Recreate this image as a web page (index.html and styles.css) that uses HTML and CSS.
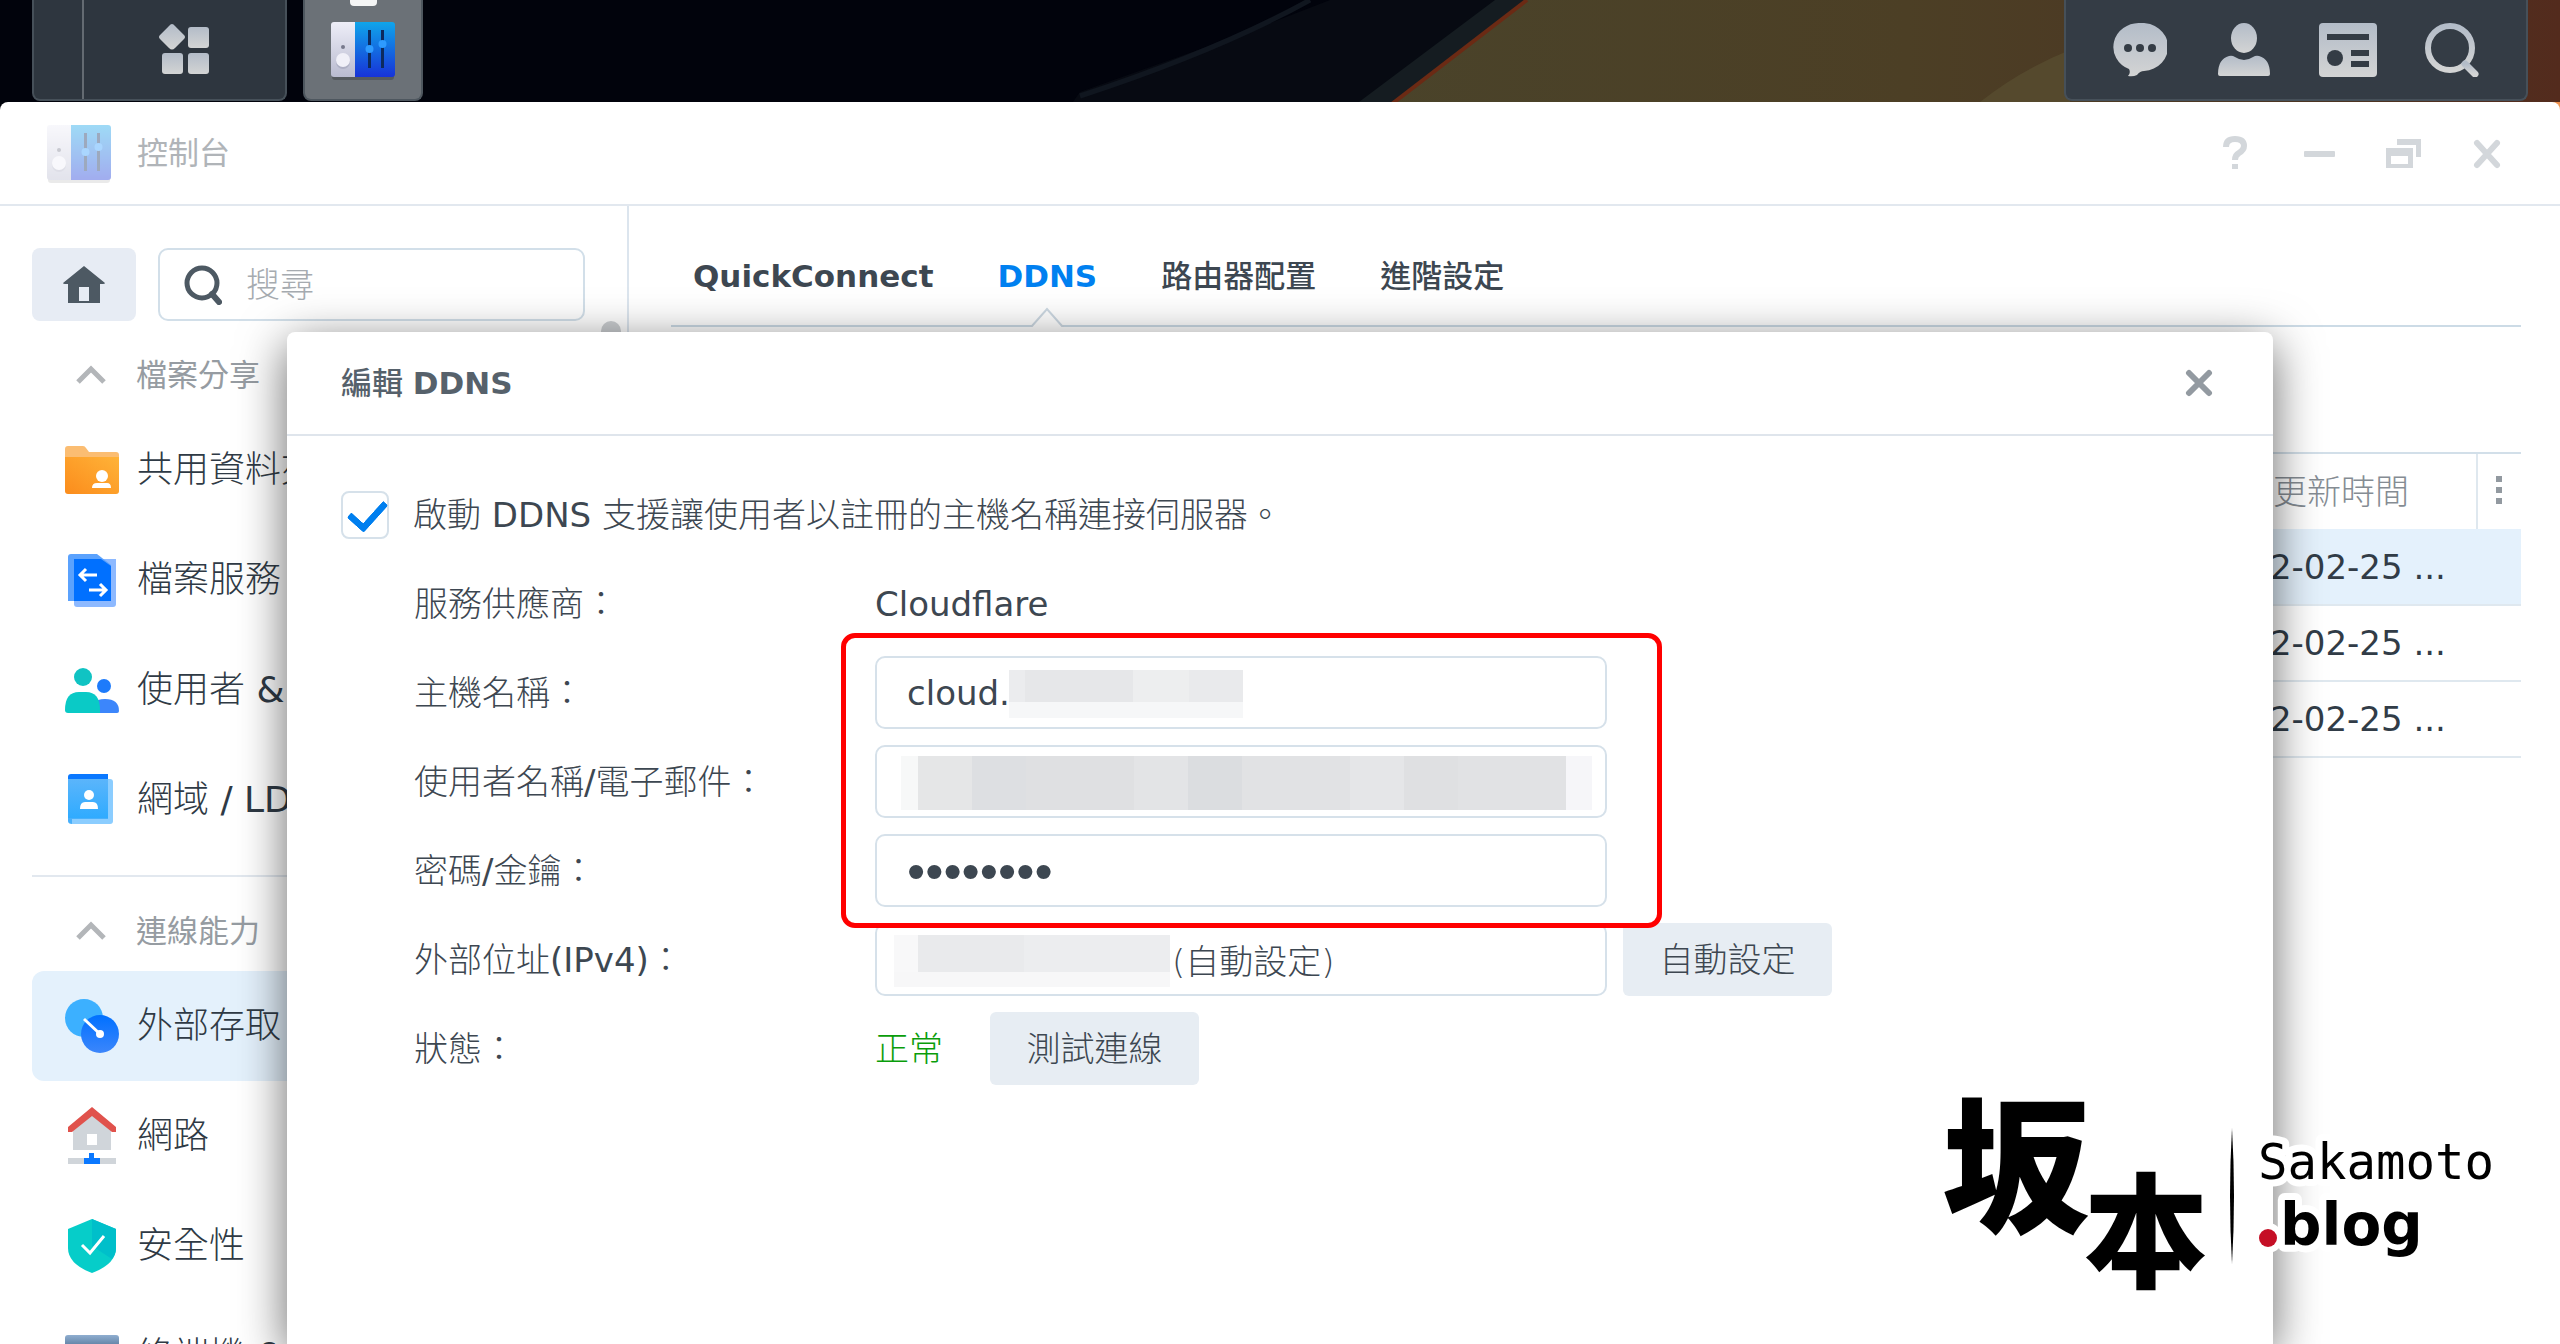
FILE: index.html
```
<!DOCTYPE html>
<html lang="zh-Hant">
<head>
  <meta charset="UTF-8">
  <meta name="viewport" content="width=device-width, initial-scale=1.0">
  <title>控制台 - DDNS</title>
  <link rel="stylesheet" href="styles.css">
</head>
<body>
  <!-- shared gradients and icons -->
  <svg class="defs" width="0" height="0" aria-hidden="true">
    <defs>
      <linearGradient id="gWall" x1="0" y1="0" x2="1" y2="0">
        <stop offset="0" stop-color="#4a432a"/>
        <stop offset="0.45" stop-color="#4c3f25"/>
        <stop offset="0.8" stop-color="#4c3523"/>
        <stop offset="1" stop-color="#532b1d"/>
      </linearGradient>
      <linearGradient id="gTray" x1="0" y1="0" x2="0" y2="1">
        <stop offset="0" stop-color="#b3bcc8"/>
        <stop offset="1" stop-color="#d3d4d4"/>
      </linearGradient>
      <linearGradient id="gPanel" x1="0" y1="0" x2="0" y2="1">
        <stop offset="0" stop-color="#10a5ea"/>
        <stop offset="1" stop-color="#1733d8"/>
      </linearGradient>
      <linearGradient id="gPanelSide" x1="0" y1="0" x2="0" y2="1">
        <stop offset="0" stop-color="#eeeef8"/>
        <stop offset="1" stop-color="#b9bbd0"/>
      </linearGradient>
      <linearGradient id="gFolder" x1="0" y1="1" x2="1" y2="0">
        <stop offset="0" stop-color="#fb8c1c"/>
        <stop offset="1" stop-color="#ffb338"/>
      </linearGradient>
      <linearGradient id="gBook" x1="0" y1="0" x2="0" y2="1">
        <stop offset="0" stop-color="#5bb5fb"/>
        <stop offset="1" stop-color="#2fabff"/>
      </linearGradient>
      <linearGradient id="gDisc" x1="0" y1="0" x2="0" y2="1">
        <stop offset="0" stop-color="#0070ff"/>
        <stop offset="1" stop-color="#3c86fb"/>
      </linearGradient>
      <linearGradient id="gTerm" x1="0" y1="0" x2="0" y2="1">
        <stop offset="0" stop-color="#8faed0"/>
        <stop offset="0.25" stop-color="#5f7fa2"/>
      </linearGradient>
    </defs>
    <symbol id="panel" viewBox="0 -3 64 62">
      <rect x="1" y="4" width="62" height="54" rx="3" fill="#000" opacity="0.2"/>
      <path d="M3 0H24V55H3a3 3 0 0 1-3-3V3a3 3 0 0 1 3-3Z" fill="url(#gPanelSide)"/>
      <path d="M24 0H61a3 3 0 0 1 3 3V52a3 3 0 0 1-3 3H24Z" fill="url(#gPanel)"/>
      <circle cx="12" cy="25" r="2" fill="#77798c"/>
      <circle cx="12" cy="40" r="7" fill="#9fa1b8" opacity="0.6"/>
      <circle cx="12" cy="38" r="7" fill="#f0f0f8"/>
      <path d="M38.500 8V46M51.500 8V46" stroke="#0c2a5e" stroke-width="3"/>
      <circle cx="38.500" cy="27" r="4" fill="#2e9bff"/>
      <circle cx="51.500" cy="22" r="4" fill="#2e9bff"/>
    </symbol>
  </svg>

  <div class="desktop">
    <svg class="wallpaper" viewBox="0 0 2560 120" preserveAspectRatio="xMaxYMin slice" aria-hidden="true">
      <rect width="2560" height="120" fill="#01030c"/>
      <path d="M1080 92L1240 35L1330 0H1560L1380 120H1060Z" fill="#070a12"/>
      <path d="M1080 96Q1220 50 1310 0" stroke="#10161f" stroke-width="5" fill="none"/>
      <path d="M1495 0H1530L1374 120H1335Z" fill="#151c21"/>
      <path d="M1527 0L1371 120H2560V0Z" fill="url(#gWall)"/>
      <path d="M1527 0L1371 120" stroke="#6b2a14" stroke-width="4"/>
      <path d="M1980 102Q2020 70 2070 50V102Z" fill="#55492d"/>
      <path d="M2540 102H2560V120H2540Z" fill="#ef9350"/>
    </svg>

    <header class="taskbar">
      <div class="launcher">
        <span class="launcher-edge"></span>
        <button class="launcher-btn" type="button" aria-label="主選單">
          <svg width="52" height="52" viewBox="0 0 52 52" fill="url(#gTray)">
            <path d="M13 0q1.500 0 3 2l9 9q2 2 0 4l-9 9q-3 3-6 0l-9-9q-2-2 0-4l9-9q1.500-2 3-2Z"/>
            <rect x="29" y="3" width="21" height="21" rx="3"/>
            <rect x="3" y="29" width="21" height="21" rx="3"/>
            <rect x="29" y="29" width="21" height="21" rx="3"/>
          </svg>
        </button>
      </div>
      <button class="task-app" type="button" aria-label="控制台">
        <svg width="64" height="62"><use href="#panel"/></svg>
      </button>
      <nav class="tray">
        <button type="button" aria-label="通知">
          <svg width="54" height="54" viewBox="0 0 54 54">
            <path d="M27 0A26 24 0 0 1 31 48Q27 48 24 52Q20 54 15 53Q18 50 16 46A26 24 0 0 1 27 0Z" fill="url(#gTray)"/>
            <g fill="#343c45"><circle cx="15" cy="25" r="4"/><circle cx="27" cy="25" r="4"/><circle cx="39" cy="25" r="4"/></g>
          </svg>
        </button>
        <button type="button" aria-label="使用者">
          <svg width="54" height="54" viewBox="0 0 54 54" fill="url(#gTray)">
            <ellipse cx="27" cy="15" rx="13" ry="15"/>
            <path d="M1 51Q1 36 12 33Q15 32 18 34Q27 40 36 34Q39 32 42 33Q53 36 53 51Q53 53 51 53H3Q1 53 1 51Z"/>
          </svg>
        </button>
        <button type="button" aria-label="小工具">
          <svg width="58" height="54" viewBox="0 0 58 54">
            <rect y="0" width="58" height="54" rx="4" fill="url(#gTray)"/>
            <g fill="#343c45"><path d="M8 11H50V17H8ZM32 27H50V33H32ZM32 38H50V44H32Z"/><circle cx="16" cy="35" r="8"/></g>
          </svg>
        </button>
        <button type="button" aria-label="搜尋">
          <svg width="54" height="54" viewBox="0 0 54 54" fill="none" stroke="url(#gTray)" stroke-width="6">
            <circle cx="25" cy="25" r="22"/><path d="M40 41L50 51" stroke-width="7" stroke-linecap="round"/>
          </svg>
        </button>
      </nav>
    </header>

    <main class="window">
      <div class="titlebar">
        <svg class="title-icon" width="64" height="62"><use href="#panel"/></svg>
        <h1>控制台</h1>
        <div class="controls">
          <button type="button" aria-label="說明">
            <svg width="32" height="34" viewBox="0 0 32 34" fill="none" stroke="#d3d7db" stroke-width="6"><path d="M7 11Q7 3 16 3Q25 3 25 10Q25 14 20 17Q16 19 16 24M16 28V33"/></svg>
          </button>
          <button type="button" aria-label="最小化">
            <svg width="32" height="34" viewBox="0 0 32 34"><rect x="1" y="15" width="31" height="6" rx="1" fill="#d3d7db"/></svg>
          </button>
          <button type="button" aria-label="還原">
            <svg width="36" height="34" viewBox="0 0 36 34" fill="#d3d7db"><path d="M12 3H36V21H31V9H12ZM1 12H28V32H1ZM6 20V28H23V20Z" fill-rule="evenodd"/></svg>
          </button>
          <button type="button" aria-label="關閉">
            <svg width="32" height="34" viewBox="0 0 32 34" stroke="#d3d7db" stroke-width="6" stroke-linecap="round"><path d="M6 7L26 29M26 7L6 29"/></svg>
          </button>
        </div>
      </div>

      <div class="content">
        <aside class="sidebar">
          <div class="side-tools">
            <button class="home" type="button" aria-label="首頁">
              <svg width="44" height="38" viewBox="0 0 44 38"><path d="M22 0L43 17Q43 18 41 18H38V37H6V18H3Q1 18 1 17ZM17 21V35H27V21Z" fill="#4d5963" fill-rule="evenodd"/></svg>
            </button>
            <label class="search">
              <svg width="38" height="40" viewBox="0 0 38 40" fill="none" stroke="#4d5963" stroke-width="5"><circle cx="18" cy="18" r="15"/><path d="M28 29L35 37" stroke-width="6" stroke-linecap="round"/></svg>
              <input type="search" placeholder="搜尋" aria-label="搜尋">
            </label>
            <span class="scroll-knob"></span>
          </div>

          <section class="side-group">
            <h2><svg width="30" height="20" viewBox="0 0 30 20"><path d="M2 17L15 4L28 17"/></svg>檔案分享</h2>
            <a href="#"><svg viewBox="0 0 54 58"><path d="M0 8Q0 5 3 5H18Q20 5 21 7L24 11H51Q54 11 54 14V30H0Z" fill="#fbbd72"/><path d="M0 16H54V50Q54 53 51 53H3Q0 53 0 50Z" fill="url(#gFolder)"/><circle cx="37" cy="35" r="6" fill="#fff"/><path d="M27 47Q27 42 32 42H42Q46 42 46 47Z" fill="#fff"/></svg>共用資料夾</a>
            <a href="#"><svg viewBox="0 0 54 58"><path d="M9 8H51V53Q51 56 48 56H12Q9 56 9 53Z" fill="#8db9ff"/><path d="M3 6Q3 3 6 3H32L46 14V50H3Z" fill="#5ba2fd"/><path d="M9 8H36L46 15V50H9Z" fill="#0070ff"/><path d="M32 24H15M21 18L15 24L21 30M24 39H41M35 33L41 39L35 45" fill="none" stroke="#fff" stroke-width="3"/></svg>檔案服務</a>
            <a href="#"><svg viewBox="0 0 54 58"><circle cx="39" cy="25" r="7" fill="#1d7bfb"/><path d="M26 52Q24 38 40 38Q54 38 54 50Q54 52 52 52Z" fill="#3c86fb"/><circle cx="18" cy="16" r="9" fill="#10c3c3"/><path d="M0 49Q0 31 14 31H21Q35 31 35 49V52H3Q0 52 0 49Z" fill="#0acac6"/></svg><span>使用者 <span class="latin">&amp;</span> 群組</span></a>
            <a href="#"><svg viewBox="0 0 54 58"><path d="M7 8H45Q48 8 48 11V50Q48 53 45 53H7Z" fill="#8bcdff"/><path d="M3 6Q3 3 6 3H43V12H3Z" fill="#0a78ff"/><path d="M3 8H43V47H3Z" fill="url(#gBook)"/><path d="M3 47H43V48H7V53Q3 53 3 50Z" fill="#48b0fb"/><circle cx="24" cy="24" r="5" fill="#fff"/><path d="M15 38Q15 31 20 31H28Q33 31 33 38Z" fill="#fff"/></svg><span>網域 <span class="latin">/ LDAP</span></span></a>
          </section>

          <section class="side-group">
            <h2><svg width="30" height="20" viewBox="0 0 30 20"><path d="M2 17L15 4L28 17"/></svg>連線能力</h2>
            <a href="#" class="active"><svg viewBox="0 0 54 58"><circle cx="19" cy="21" r="19" fill="#3cb0ff"/><circle cx="35" cy="37" r="19" fill="url(#gDisc)"/><path d="M19 22L35 37" stroke="#fff" stroke-width="3"/><circle cx="35" cy="37" r="4" fill="#fff"/></svg>外部存取</a>
            <a href="#"><svg viewBox="0 0 54 58"><path d="M8 19L27 4L46 19V43H8Z" fill="#d0d5da"/><path d="M22 27H32V38H22Z" fill="#fff"/><path d="M3 20L27 0L51 20V25H47L27 9L7 25H3Z" fill="#e0524c"/><path d="M3 51H51V57H3Z" fill="#d0d5da"/><path d="M24 46H29V51H35V57H19V51H24Z" fill="#0a78ff"/></svg>網路</a>
            <a href="#"><svg viewBox="0 0 54 58"><path d="M27 2L51 12V31Q51 47 27 56Q3 47 3 31V12Z" fill="#06cdc9"/><path d="M27 2L51 12V31Q51 37 47 42L27 29Z" fill="#00bfca"/><path d="M17 28L25 36L39 19" fill="none" stroke="#fff" stroke-width="3"/></svg>安全性</a>
            <a href="#"><svg viewBox="0 0 54 58"><rect y="8" width="54" height="44" rx="3" fill="url(#gTerm)"/></svg><span>終端機 <span class="latin">&amp; SNMP</span></span></a>
          </section>
        </aside>

        <section class="main">
          <nav class="tabs">
            <a href="#" class="latin">QuickConnect</a>
            <a href="#" class="latin current">DDNS<svg width="34" height="20" viewBox="0 0 34 20"><path d="M2 18L17 2L32 18V20H2Z" fill="#fff" stroke="none"/><path d="M0 19H2L17 2L32 19H34" fill="none" stroke="#ccd8e2" stroke-width="2"/></svg></a>
            <a href="#">路由器配置</a>
            <a href="#">進階設定</a>
          </nav>
          <table class="records">
            <thead>
              <tr>
                <th></th>
                <th class="col-time">上次更新時間</th>
                <th class="col-more">
                  <button type="button" aria-label="欄位"><svg width="6" height="28" viewBox="0 0 6 28" fill="#9299a0"><path d="M0 0H6V6H0ZM0 11H6V17H0ZM0 22H6V28H0Z"/></svg></button>
                </th>
              </tr>
            </thead>
            <tbody>
              <tr class="selected"><td></td><td>2022-02-25 ...</td><td></td></tr>
              <tr><td></td><td>2022-02-25 ...</td><td></td></tr>
              <tr><td></td><td>2022-02-25 ...</td><td></td></tr>
            </tbody>
          </table>
        </section>
      </div>
    </main>

    <div class="dialog" role="dialog" aria-labelledby="dialogTitle">
      <div class="dialog-head">
        <h2 id="dialogTitle">編輯 <span class="latin">DDNS</span></h2>
        <button type="button" aria-label="關閉">
          <svg width="28" height="28" viewBox="0 0 28 28" stroke="#939aa1" stroke-width="6" stroke-linecap="round"><path d="M4 4L24 24M24 4L4 24"/></svg>
        </button>
      </div>
      <form class="dialog-body">
        <div class="enable">
          <input type="checkbox" id="enable" checked>
          <label for="enable">啟動 <span class="latin">DDNS</span> 支援讓使用者以註冊的主機名稱連接伺服器。</label>
        </div>
        <div class="row">
          <span class="name">服務供應商：</span>
          <span class="latin">Cloudflare</span>
        </div>
        <div class="credentials">
          <div class="row">
            <label class="name" for="host">主機名稱：</label>
            <div class="field">
              <input type="text" id="host" class="latin" value="cloud.">
              <span class="mask mask-host"></span>
            </div>
          </div>
          <div class="row">
            <label class="name" for="account">使用者名稱<span class="latin">/</span>電子郵件：</label>
            <div class="field">
              <input type="text" id="account">
              <span class="mask mask-account"></span>
            </div>
          </div>
          <div class="row">
            <label class="name" for="secret">密碼<span class="latin">/</span>金鑰：</label>
            <div class="field">
              <input type="password" id="secret" value="12345678">
            </div>
          </div>
          <span class="highlight"></span>
        </div>
        <div class="row">
          <label class="name" for="ipv4">外部位址<span class="latin">(IPv4)</span>：</label>
          <div class="field">
            <input type="text" id="ipv4" class="ip" value="(自動設定)">
            <span class="mask mask-ip"></span>
          </div>
          <button class="btn" type="button">自動設定</button>
        </div>
        <div class="row">
          <span class="name">狀態：</span>
          <span class="status">正常</span>
          <button class="btn" type="button">測試連線</button>
        </div>
      </form>
    </div>

    <svg class="logo" width="600" height="250" viewBox="0 0 600 250" role="img" aria-label="坂本 Sakamoto .blog">
      <text class="kanji" x="12" y="142" font-size="148">坂</text>
      <text class="kanji" x="154" y="198" font-size="124">本</text>
      <path d="M302 48Q306 116 302 184Q298 116 302 48Z"/>
      <text class="script" x="328" y="99">Sakamoto</text>
      <circle cx="338" cy="158" r="9" fill="#c50f26" stroke="#fff" stroke-width="12" paint-order="stroke"/>
      <text class="blog" x="350" y="165">blog</text>
    </svg>
  </div>
</body>
</html>
```

FILE: styles.css
```
* { box-sizing: border-box; }
body { margin: 0; font-family: "DejaVu Sans", "Noto Sans CJK TC", sans-serif; font-size: 34px; font-weight: 300; line-height: 48px; color: #3d4751; background: #01030c; }
button, input { font: inherit; color: inherit; }
button { border: 0; padding: 0; background: none; cursor: pointer; }
a { color: inherit; text-decoration: none; }
h1, h2 { margin: 0; font-size: 31px; font-weight: 400; }
svg { display: block; flex: none; }
.latin { font-weight: 400; }
.defs { position: absolute; }

.desktop { position: relative; height: 100vh; display: flex; flex-direction: column; overflow: hidden; }
.wallpaper { position: absolute; top: 0; left: 0; width: 100%; height: 120px; }

/* taskbar */
.taskbar { position: relative; display: flex; height: 102px; padding: 0 32px; gap: 16px; flex: none; }
.launcher, .task-app, .tray { display: flex; height: 101px; border: 2px solid #465059; border-top: 0; border-radius: 0 0 8px 8px; background: #2e363f; }
.launcher { width: 255px; }
.launcher-edge { width: 50px; border-right: 2px solid #646b72; }
.launcher-btn { flex: 1; display: flex; align-items: center; justify-content: center; }
.task-app { position: relative; width: 120px; background: #6b7177; border-color: #4e575f; align-items: center; justify-content: center; }
.task-app::before { content: ""; position: absolute; top: 0; left: 45px; width: 27px; height: 6px; border-radius: 0 0 4px 4px; background: #f4f5f5; }
.tray { margin-left: auto; padding: 0 22px; background: #343c45; }
.tray button { width: 104px; display: flex; align-items: center; justify-content: center; }

/* control panel window */
.window { position: relative; flex: 1; min-height: 0; display: flex; flex-direction: column; background: #fff; border-radius: 8px 8px 0 0; }
.titlebar { display: flex; align-items: center; height: 104px; flex: none; padding: 0 31px 0 47px; border-bottom: 2px solid #e2e8ef; }
.title-icon { opacity: 0.4; }
.titlebar h1 { margin-left: 26px; color: #b0b4b8; }
.controls { margin-left: auto; display: flex; }
.controls button { width: 84px; display: flex; justify-content: center; }
.content { flex: 1; min-height: 0; display: flex; }

.sidebar { width: 629px; flex: none; overflow: hidden; border-right: 2px solid #dce5ee; }
.side-tools { position: relative; display: flex; gap: 22px; padding: 42px 42px 0 32px; }
.home { width: 104px; height: 73px; border-radius: 8px; background: #e7ecf4; display: flex; align-items: center; justify-content: center; }
.search { flex: 1; display: flex; align-items: center; gap: 24px; height: 73px; padding: 0 24px; border: 2px solid #d2dfe9; border-radius: 10px; }
.search input { width: 100%; min-width: 0; padding: 0; border: 0; outline: 0; background: none; }
.search input::placeholder { color: #a6abb0; opacity: 1; }
.scroll-knob { position: absolute; right: 6px; top: 115px; width: 20px; height: 60px; border-radius: 10px; background: #cccfd2; }
.side-group { padding: 14px 0 20px 32px; }
.side-group + .side-group { margin-left: 32px; padding: 14px 0 0; border-top: 2px solid #e2e8ef; }
.side-group h2 { display: flex; align-items: center; gap: 30px; height: 80px; padding-left: 44px; color: #969ca2; }
.side-group h2 svg { fill: none; stroke: #b3b6b9; stroke-width: 5px; }
.side-group a { display: flex; align-items: center; gap: 18px; height: 110px; padding-left: 33px; border-radius: 12px; font-size: 36px; color: #2f3a45; white-space: nowrap; }
.side-group a svg { width: 54px; height: 58px; }
.side-group a.active { background: #e4f1fc; }

.main { flex: 1; min-width: 0; padding: 42px 39px 0 42px; }
.tabs { display: flex; gap: 64px; height: 79px; padding: 4px 22px 0; border-bottom: 2px solid #ccdbe6; font-size: 31px; font-weight: 500; }
.tabs .latin { font-weight: bold; }
.tabs .current { position: relative; color: #0080f0; }
.tabs .current svg { position: absolute; left: 50%; bottom: -2px; margin-left: -17px; }
.records { width: 100%; margin-top: 125px; border-collapse: collapse; table-layout: fixed; }
.records th { height: 76px; padding: 0 0 0 16px; border-top: 2px solid #d2dfe9; font-weight: 300; text-align: left; color: #858c93; }
.records td { height: 76px; padding: 0 0 0 16px; border-bottom: 2px solid #dfe8ef; font-weight: 400; color: #313c47; white-space: nowrap; }
.records .col-time { width: 288px; }
.records .col-more { width: 44px; padding: 0 0 0 18px; border-left: 2px solid #dfe8ef; }
.records .selected { background: #e4f1fc; }

/* edit dialog */
.dialog { position: absolute; top: 332px; left: 287px; right: 287px; bottom: 0; background: #fff; border-radius: 8px 8px 0 0; box-shadow: 0 12px 48px rgba(0,0,0,0.6); }
.dialog-head { display: flex; align-items: center; justify-content: space-between; height: 104px; padding: 0 60px 0 54px; border-bottom: 2px solid #dfe5ec; }
.dialog-head h2 { font-weight: 500; color: #56616b; }
.dialog-head .latin { font-weight: bold; }
.dialog-body { display: flex; flex-direction: column; gap: 16px; padding: 42px 54px; }
.enable, .row { display: flex; align-items: center; height: 73px; }
.enable input { appearance: none; position: relative; width: 48px; height: 48px; margin: 0 24px 0 0; border: 2px solid #d6e1ea; border-radius: 8px; }
.enable input:checked::before { content: ""; position: absolute; left: 13px; top: 0; width: 16px; height: 30px; border: solid #007fef; border-width: 0 7px 7px 0; border-radius: 3px; transform: rotate(42deg); }
.name { width: 534px; flex: none; padding-left: 73px; }
.credentials { position: relative; display: flex; flex-direction: column; gap: 16px; }
.highlight { position: absolute; top: -23px; left: 500px; width: 821px; height: 295px; border: 5px solid #f00; border-radius: 14px; pointer-events: none; z-index: 1; }
.field { position: relative; width: 732px; }
.field input { display: block; width: 100%; height: 73px; padding: 0 30px; border: 2px solid #d6e1ea; border-radius: 10px; outline: 0; background: #fff; }
.field input[type="password"] { font-family: "Liberation Sans", sans-serif; font-size: 52px; }
.field .ip { padding-left: 295px; }
.btn { width: 209px; height: 73px; border-radius: 6px; background: #e7edf3; }
.field + .btn { margin-left: 16px; }
.status { width: 115px; color: #0a9d0a; }

/* pixelated cover over private values */
.mask { position: absolute; }
.mask-host { left: 134px; top: 14px; width: 234px; height: 48px; background: linear-gradient(to bottom, transparent 32px, #f6f7f8 32px), linear-gradient(to right, #ebecee 16px, #e6e7e9 16px, #e6e7e9 124px, #edeeef 124px, #edeeef 180px, #e9eaec 180px); }
.mask-account { left: 26px; top: 11px; width: 691px; height: 54px; background: linear-gradient(to right, #f7f8f8 17px, #e5e6e7 17px, #e5e6e7 71px, #dddfe2 71px, #dddfe2 125px, #dfe0e2 125px, #dfe0e2 233px, #e3e4e6 233px, #e3e4e6 287px, #dbdde0 287px, #dbdde0 341px, #e1e2e4 341px, #e1e2e4 449px, #e5e6e8 449px, #e5e6e8 503px, #dfe0e2 503px, #dfe0e2 557px, #e1e2e4 557px, #e1e2e4 665px, #f6f6f9 665px); }
.mask-ip { left: 19px; top: 12px; width: 276px; height: 52px; background: linear-gradient(to bottom, transparent 37px, #f7f7f8 37px), linear-gradient(to right, #f8f8f9 24px, #e9eaec 24px, #e9eaec 130px, #ecedef 130px); }

.logo { position: absolute; right: 30px; bottom: 14px; }
.logo text { fill: #000; stroke: #fff; stroke-width: 14px; stroke-linejoin: round; paint-order: stroke; }
.logo .kanji { font-family: "Noto Sans CJK TC", sans-serif; font-weight: 900; stroke: none; }
.logo .script { font-family: "DejaVu Sans Mono", monospace; font-size: 49px; font-weight: 400; }
.logo .blog { font-size: 58px; font-weight: bold; }
```
